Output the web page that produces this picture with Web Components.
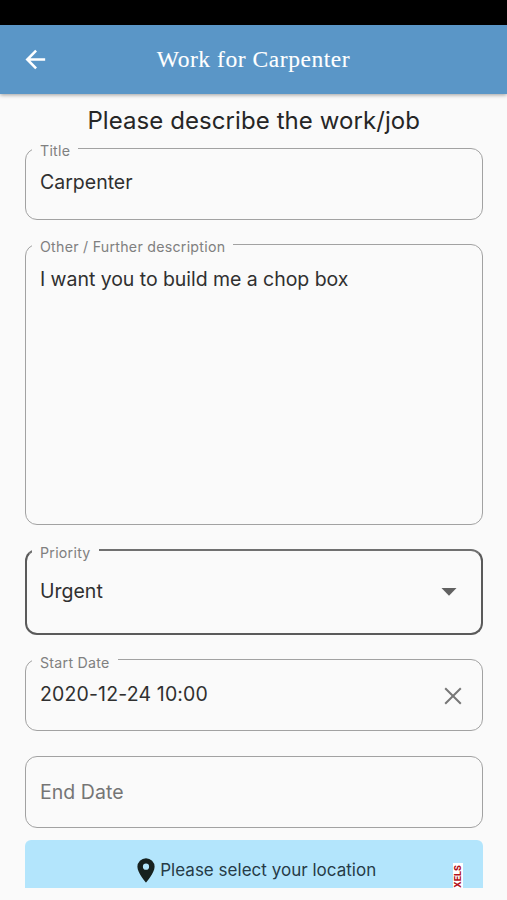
<!DOCTYPE html>
<html lang="en">
<head>
<meta charset="utf-8">
<title>Work for Carpenter</title>
<style>
body{margin:0;background:#fafafa;font-family:Inter,"Liberation Sans",sans-serif;color:#303030}
</style>
</head>
<body>
<job-screen>
  <app-bar>Work for Carpenter</app-bar>
  <job-form>
    <span slot="heading">Please describe the work/job</span>
    <outlined-field style="--h:72px;--pad:21px;--ls:0px" label="Title">Carpenter</outlined-field>
    <outlined-field style="--h:281px;--gap:24px;--ls:-.05px" label="Other / Further description">I want you to build me a chop box</outlined-field>
    <outlined-field style="--h:86px;--gap:24px;--pad:28px;--line:#5a5a5a;--top:#707070;--bw:2px;--end:24px;--ls:0px;--px:13px;--lx:5px" label="Priority">Urgent<drop-icon slot="icon"></drop-icon></outlined-field>
    <outlined-field style="--h:72px;--gap:24px;--lt:-6px" label="Start Date">2020-12-24 10:00<clear-icon slot="icon"></clear-icon></outlined-field>
    <outlined-field style="--h:72px;--gap:25px;--pad:23px;--ink:#757575;--ls:.05px">End Date</outlined-field>
    <location-button>Please select your location</location-button>
  </job-form>
</job-screen>
<script>
const define = (name, html, setup) => customElements.define(name, class extends HTMLElement {
  constructor() {
    super();
    this.attachShadow({ mode: 'open' }).innerHTML = html;
  }
  connectedCallback() { if (setup) setup(this, this.shadowRoot); }
});

define('job-screen', `<style>
:host{display:flex;flex-direction:column;height:900px;overflow:hidden;background:#fafafa}
.status{height:25px;background:#000;flex:none}
</style><div class="status"></div><slot></slot>`);

define('app-bar', `<style>
:host{display:grid;grid-template-columns:72px 1fr 72px;align-items:center;height:69px;flex:none;background:#5a96c7;
 color:#fff;font:23.5px/28px "Liberation Serif",serif;box-shadow:0 1px 4px rgba(0,0,0,.38)}
svg{margin-left:21px;width:29px;height:29px;display:block}
.t{padding-bottom:2px;text-align:center;letter-spacing:.55px;white-space:nowrap;-webkit-text-stroke:.1px #fff}
</style><svg viewBox="0 0 24 24" fill="none" stroke="#fff" stroke-width="2.1"><path d="M20 12H5M12.5 4.7 5.2 12l7.3 7.3"/></svg><div class="t"><slot></slot></div>`);

define('job-form', `<style>
:host{display:flex;flex-direction:column;padding:12px 24.5px 0 25px}
.h{font-size:24px;line-height:30px;height:42px;text-align:center;letter-spacing:.08px;color:#262626;white-space:nowrap}
</style><div class="h"><slot name="heading"></slot></div><slot></slot>`);

define('outlined-field', `<style>
:host{display:flex;justify-content:space-between;align-items:flex-start;position:relative;box-sizing:border-box;flex:none;
 height:var(--h);margin-top:var(--gap,0);padding:var(--pad,22px) var(--end,20px) 0 var(--px,14px);
 border:var(--bw,1px) solid var(--line,#a2a2a2);border-top-color:var(--top,var(--line,#a2a2a2));border-radius:12px}
.v{font-size:19.5px;line-height:24px;letter-spacing:var(--ls,.15px);color:var(--ink,#303030);white-space:nowrap}
label{position:absolute;left:var(--lx,6px);top:var(--lt,-7px);padding:0 8px;background:#fafafa;font-size:14.2px;line-height:18px;letter-spacing:.26px;color:#808080;white-space:nowrap}
label:empty{display:none}
</style><label></label><div class="v"><slot></slot></div><slot name="icon"></slot>`,
(el, root) => { root.querySelector('label').textContent = el.getAttribute('label') || ''; });

define('drop-icon', `<style>:host{display:block;padding-top:9px}svg{display:block}</style>
<svg width="16" height="8"><path d="M.5 0h15L8 7.8z" fill="#616161"/></svg>`);

define('clear-icon', `<style>:host{display:block;padding-top:5px}svg{display:block}</style>
<svg width="18" height="18"><path d="M1.2 1.2l15.6 15.6M16.8 1.2 1.2 16.8" stroke="#777" stroke-width="2" fill="none"/></svg>`);

define('location-button', `<style>
:host{display:flex;justify-content:center;align-items:flex-start;position:relative;box-sizing:border-box;height:48px;flex:none;
 margin-top:12px;padding:18px 0 0 6px;gap:5px;background:#b3e5fc;border-radius:6px 6px 0 0;color:#263b47;font-size:17px;line-height:25px;letter-spacing:.02px;white-space:nowrap;overflow:hidden}
svg{display:block;flex:none}
.mark{position:absolute;right:20px;bottom:0;width:10px;height:25px;background:#fff;color:#b3121c;
 font-size:8.8px;line-height:10px;font-weight:800;letter-spacing:0;writing-mode:vertical-rl;transform:rotate(180deg)}
</style><svg width="18" height="25" viewBox="0 0 18 25"><path fill="#17211f" fill-rule="evenodd" d="M9 .2A8.6 8.6 0 0 0 .4 8.8C.4 15 9 24.6 9 24.6S17.6 15 17.6 8.8A8.6 8.6 0 0 0 9 .2zM9 5.6a3.1 3.1 0 1 1 0 6.2 3.1 3.1 0 0 1 0-6.2z"/></svg><slot></slot><span class="mark">XELS</span>`);
</script>
</body>
</html>
